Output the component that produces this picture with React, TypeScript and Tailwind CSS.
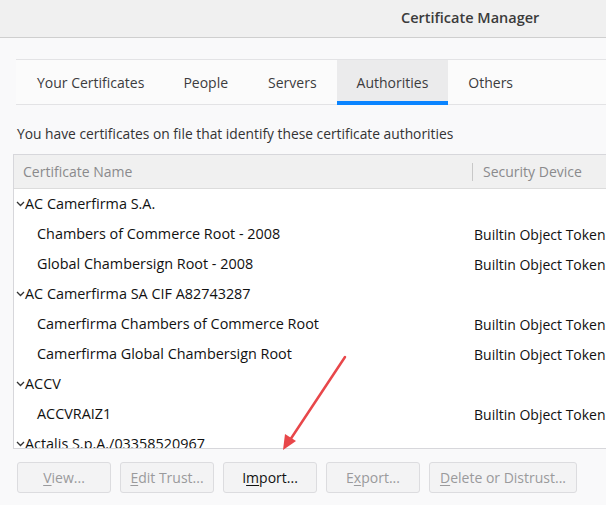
import React from "react";

const TABS = ["Your Certificates", "People", "Servers", "Authorities", "Others"];

const ROWS: { name: string; device?: string; parent?: boolean }[] = [
  { name: "AC Camerfirma S.A.", parent: true },
  { name: "Chambers of Commerce Root - 2008", device: "Builtin Object Token" },
  { name: "Global Chambersign Root - 2008", device: "Builtin Object Token" },
  { name: "AC Camerfirma SA CIF A82743287", parent: true },
  { name: "Camerfirma Chambers of Commerce Root", device: "Builtin Object Token" },
  { name: "Camerfirma Global Chambersign Root", device: "Builtin Object Token" },
  { name: "ACCV", parent: true },
  { name: "ACCVRAIZ1", device: "Builtin Object Token" },
  { name: "Actalis S.p.A./03358520967", parent: true },
];

function Chevron() {
  return (
    <svg width="9" height="6" viewBox="0 0 9 6" className="mt-[1px] shrink-0">
      <path d="M1 1 L4.5 4.5 L8 1" fill="none" stroke="#333" strokeWidth="1.3" />
    </svg>
  );
}

function Btn({ label, u, disabled, w }: { label: string; u: number; disabled?: boolean; w: string }) {
  return (
    <div
      className={`${w} h-[31px] flex items-center justify-center rounded-[3px] border border-[#dcdcdf] bg-[#f3f3f4] text-[14px] ${
        disabled ? "text-[#9a9a9c]" : "text-[#111]"
      }`}
    >
      {label.slice(0, u)}
      <span className="underline underline-offset-2">{label[u]}</span>
      {label.slice(u + 1)}
    </div>
  );
}

export default function App() {
  return (
    <div className="relative w-[606px] h-[505px] overflow-hidden bg-[#f9f9fa] font-['Segoe_UI','Open_Sans',sans-serif] text-[#333]">
      {/* title bar */}
      <div className="h-[38px] bg-[#f0f0f0] border-b border-[#cfcfcf] flex items-center pb-[2px] pl-[401px] text-[14.5px] font-semibold text-[#3b3b3b]">
        Certificate Manager
      </div>

      {/* tabs */}
      <div className="ml-[16px] mt-[21px] h-[46px] border-y border-[#e3e3e5] bg-[#fbfbfb] flex">
        {TABS.map((t, i) => (
          <div
            key={t}
            className={`relative flex items-center text-[14px] text-[#3c3c3e] ${
              t === "Authorities" ? "bg-[#ebebec] px-[20px]" : i === 0 ? "pl-[21px] pr-[19px]" : "px-[20px]"
            }`}
          >
            {t}
            {t === "Authorities" && <div className="absolute left-0 right-0 bottom-[-1px] h-[4px] bg-[#0a84ff]" />}
          </div>
        ))}
      </div>

      <div className="pl-[17px] mt-[19px] text-[13.8px] leading-[20px] text-[#333]">
        You have certificates on file that identify these certificate authorities
      </div>

      {/* tree */}
      <div className="ml-[13px] mt-[10px] h-[295px] border border-r-0 border-[#d7d7db] bg-white overflow-hidden">
        <div className="h-[34px] bg-[#f0f0f0] border-b border-[#dcdcdc] flex items-center text-[14px] text-[#8a8a8c]">
          <div className="w-[458px] shrink-0 pl-[9px]">Certificate Name</div>
          <div className="w-px h-[18px] shrink-0 bg-[#c8c8c8]" />
          <div className="pl-[10px] whitespace-nowrap">Security Device</div>
        </div>
        {ROWS.map((r) => (
          <div key={r.name} className="h-[30px] flex items-center text-[14.4px] text-[#111] whitespace-nowrap">
            <div className={`w-[460px] shrink-0 flex items-center ${r.parent ? "pl-[2px]" : "pl-[23px]"}`}>
              {r.parent && <Chevron />}
              {r.name}
            </div>
            {r.device && <div className="text-[14px]">{r.device}</div>}
          </div>
        ))}
      </div>

      {/* buttons */}
      <div className="pl-[17px] mt-[13px] flex gap-[9px]">
        <Btn label="View..." u={0} disabled w="w-[94px]" />
        <Btn label="Edit Trust..." u={0} disabled w="w-[94px]" />
        <Btn label="Import..." u={1} w="w-[94px]" />
        <Btn label="Export..." u={1} disabled w="w-[94px]" />
        <Btn label="Delete or Distrust..." u={0} disabled w="w-[148px]" />
      </div>

      {/* annotation arrow */}
      <svg className="absolute left-0 top-0 pointer-events-none" width="606" height="505">
        <line x1="345" y1="357" x2="290" y2="440" stroke="#e8474a" strokeWidth="2.5" strokeLinecap="round" />
        <path d="M283 450 L285 434 L296 441 Z" fill="#e8474a" />
      </svg>
    </div>
  );
}
